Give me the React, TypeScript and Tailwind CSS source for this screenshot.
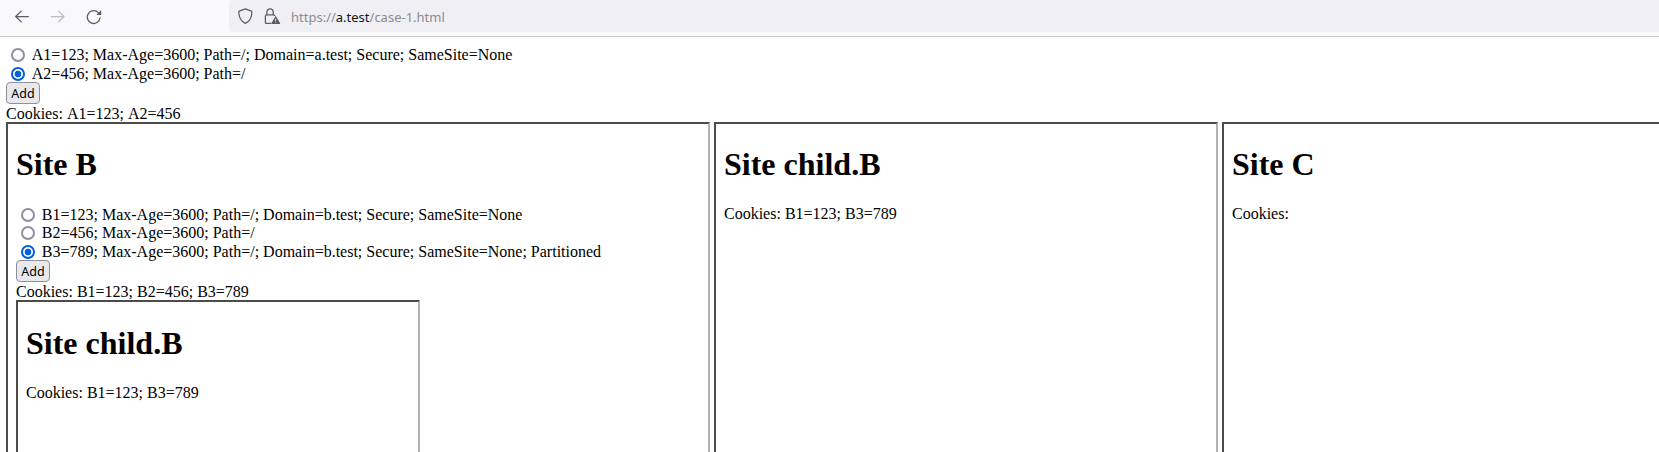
import type { ReactNode } from "react";

function Option({ name, checked, className, children }: { name: string; checked?: boolean; className: string; children: ReactNode }) {
  return (
    <label className={`flex items-start leading-[20px] whitespace-nowrap ${className}`}>
      <input
        type="radio"
        name={name}
        defaultChecked={checked}
        className="mt-[3px] mr-[6.8px] ml-[5px] size-[14px] shrink-0 appearance-none rounded-full border-2 border-[#8f8f9d] bg-white checked:border-[#0060df] checked:bg-[radial-gradient(circle,#0060df_3px,#ffffff_3.7px)] checked:bg-origin-border"
      />
      <span>{children}</span>
    </label>
  );
}

function AddButton() {
  return (
    <button className="block h-[22px] w-[34px] rounded-[4px] border border-[#8f8f9d] bg-[#e9e9ed] pt-px text-center font-['Noto_Sans',sans-serif] text-[12.5px] leading-[19px]">
      Add
    </button>
  );
}

function Frame({ title, className, children }: { title: string; className: string; children: ReactNode }) {
  return (
    <section
      className={`shrink-0 border-2 border-t-[#4c4c4c] border-r-[#b2b2b2] border-b-[#b2b2b2] border-l-[#4c4c4c] px-2 ${className}`}
    >
      <h1 className="mt-[22px] mb-[22px] text-[32px] leading-[37px] font-bold">{title}</h1>
      {children}
    </section>
  );
}

function Toolbar() {
  return (
    <header className="flex h-[37px] shrink-0 items-start border-b border-[#cccccf] bg-[#f9f9fb] text-[#5b5b66]">
      <nav className="flex w-[229px] shrink-0 pt-[9px] pl-[14px]">
        <svg width="16" height="16" viewBox="0 0 16 16" fill="none" stroke="currentColor" strokeWidth="1.25" strokeLinecap="round" strokeLinejoin="round">
          <path d="M14.4 7.5H1.7M7.2 2.1 1.7 7.5l5.5 5.4" />
        </svg>
        <svg className="ml-5 text-[#bbbbc2]" width="16" height="16" viewBox="0 0 16 16" fill="none" stroke="currentColor" strokeWidth="1.25" strokeLinecap="round" strokeLinejoin="round">
          <path d="M1.3 7.5H14M8.5 2.1 14 7.5l-5.5 5.4" />
        </svg>
        <svg className="ml-5" width="16" height="16" viewBox="0 0 16 16" fill="none" stroke="currentColor" strokeWidth="1.3" strokeLinecap="round">
          <path d="M14.1 8.8A6.4 6.4 0 1 1 12.3 3.6" />
          <path d="M15.2 1v4.400q0 .500-.500.500H10.300z" fill="currentColor" stroke="none" />
        </svg>
      </nav>
      <div className="flex h-8 grow items-start rounded-l-[4px] bg-[#f0f0f4] pl-[9px]">
        <svg className="mt-2" width="16" height="17" viewBox="0 0 16 17" fill="none" stroke="currentColor" strokeWidth="1.25" strokeLinejoin="round">
          <path d="M7.4.8 1.3 3.2c-.3.1-.5.4-.5.8.1 5.2 2 9.2 6.6 11.4 4.5-2.2 6.4-6.2 6.5-11.4 0-.4-.2-.7-.5-.8z" />
        </svg>
        <svg className="mt-2 ml-[10px]" width="17" height="17" viewBox="0 0 17 17" fill="none" stroke="currentColor" strokeWidth="1.3">
          <path d="M7.3 15.4H2.4Q1.4 15.4 1.4 14.4V7.9Q1.4 6.9 2.4 6.9H9.6Q10.7 6.9 10.7 7.9M2.900 6.900V4a3.150 3.150 0 0 1 6.300 0v2.900" />
          <path d="M11.7 7.800 16.200 15.200q.2.8-.6.8H8q-.8 0-.6-.8z" fill="currentColor" stroke="none" />
          <path d="M11.700 10.500v2.500M11.700 13.800v1" stroke="#f0f0f4" strokeWidth="0.9" />
        </svg>
        <span className="mt-[7px] ml-[10px] font-['Noto_Sans',sans-serif] text-[13px] leading-[20px] whitespace-nowrap text-[#8a8a92]">
          https://<span className="text-[#15141a]">a.test</span>/case-1.html
        </span>
      </div>
    </header>
  );
}

export default function App() {
  return (
    <div className="flex h-[452px] flex-col overflow-hidden bg-white font-['Liberation_Serif',serif] text-[16px] leading-[18px] text-black">
      <Toolbar />
      <main className="grow pt-[8px] pl-[6px]">
        <Option name="a" className="h-[19px]">A1=123; Max-Age=3600; Path=/; Domain=a.test; Secure; SameSite=None</Option>
        <Option name="a" className="h-[18px]" checked>A2=456; Max-Age=3600; Path=/</Option>
        <AddButton />
        <p className="h-[18px] leading-[20px] [font-kerning:none]">Cookies: A1=123; A2=456</p>
        <div className="flex gap-1">
          <Frame title="Site B" className="h-[504px] w-[704px]">
            <Option name="b" className="h-[18px]">B1=123; Max-Age=3600; Path=/; Domain=b.test; Secure; SameSite=None</Option>
            <Option name="b" className="h-[19px]">B2=456; Max-Age=3600; Path=/</Option>
            <Option name="b" className="h-[18px]" checked>B3=789; Max-Age=3600; Path=/; Domain=b.test; Secure; SameSite=None; Partitioned</Option>
            <AddButton />
            <p className="h-[18px] leading-[20px]">Cookies: B1=123; B2=456; B3=789</p>
            <Frame title="Site child.B" className="h-[204px] w-[404px] pt-px">
              <p>Cookies: B1=123; B3=789</p>
            </Frame>
          </Frame>
          <Frame title="Site child.B" className="h-[504px] w-[504px]">
            <p>Cookies: B1=123; B3=789</p>
          </Frame>
          <Frame title="Site C" className="h-[504px] w-[504px]">
            <p>Cookies:</p>
          </Frame>
        </div>
      </main>
    </div>
  );
}
